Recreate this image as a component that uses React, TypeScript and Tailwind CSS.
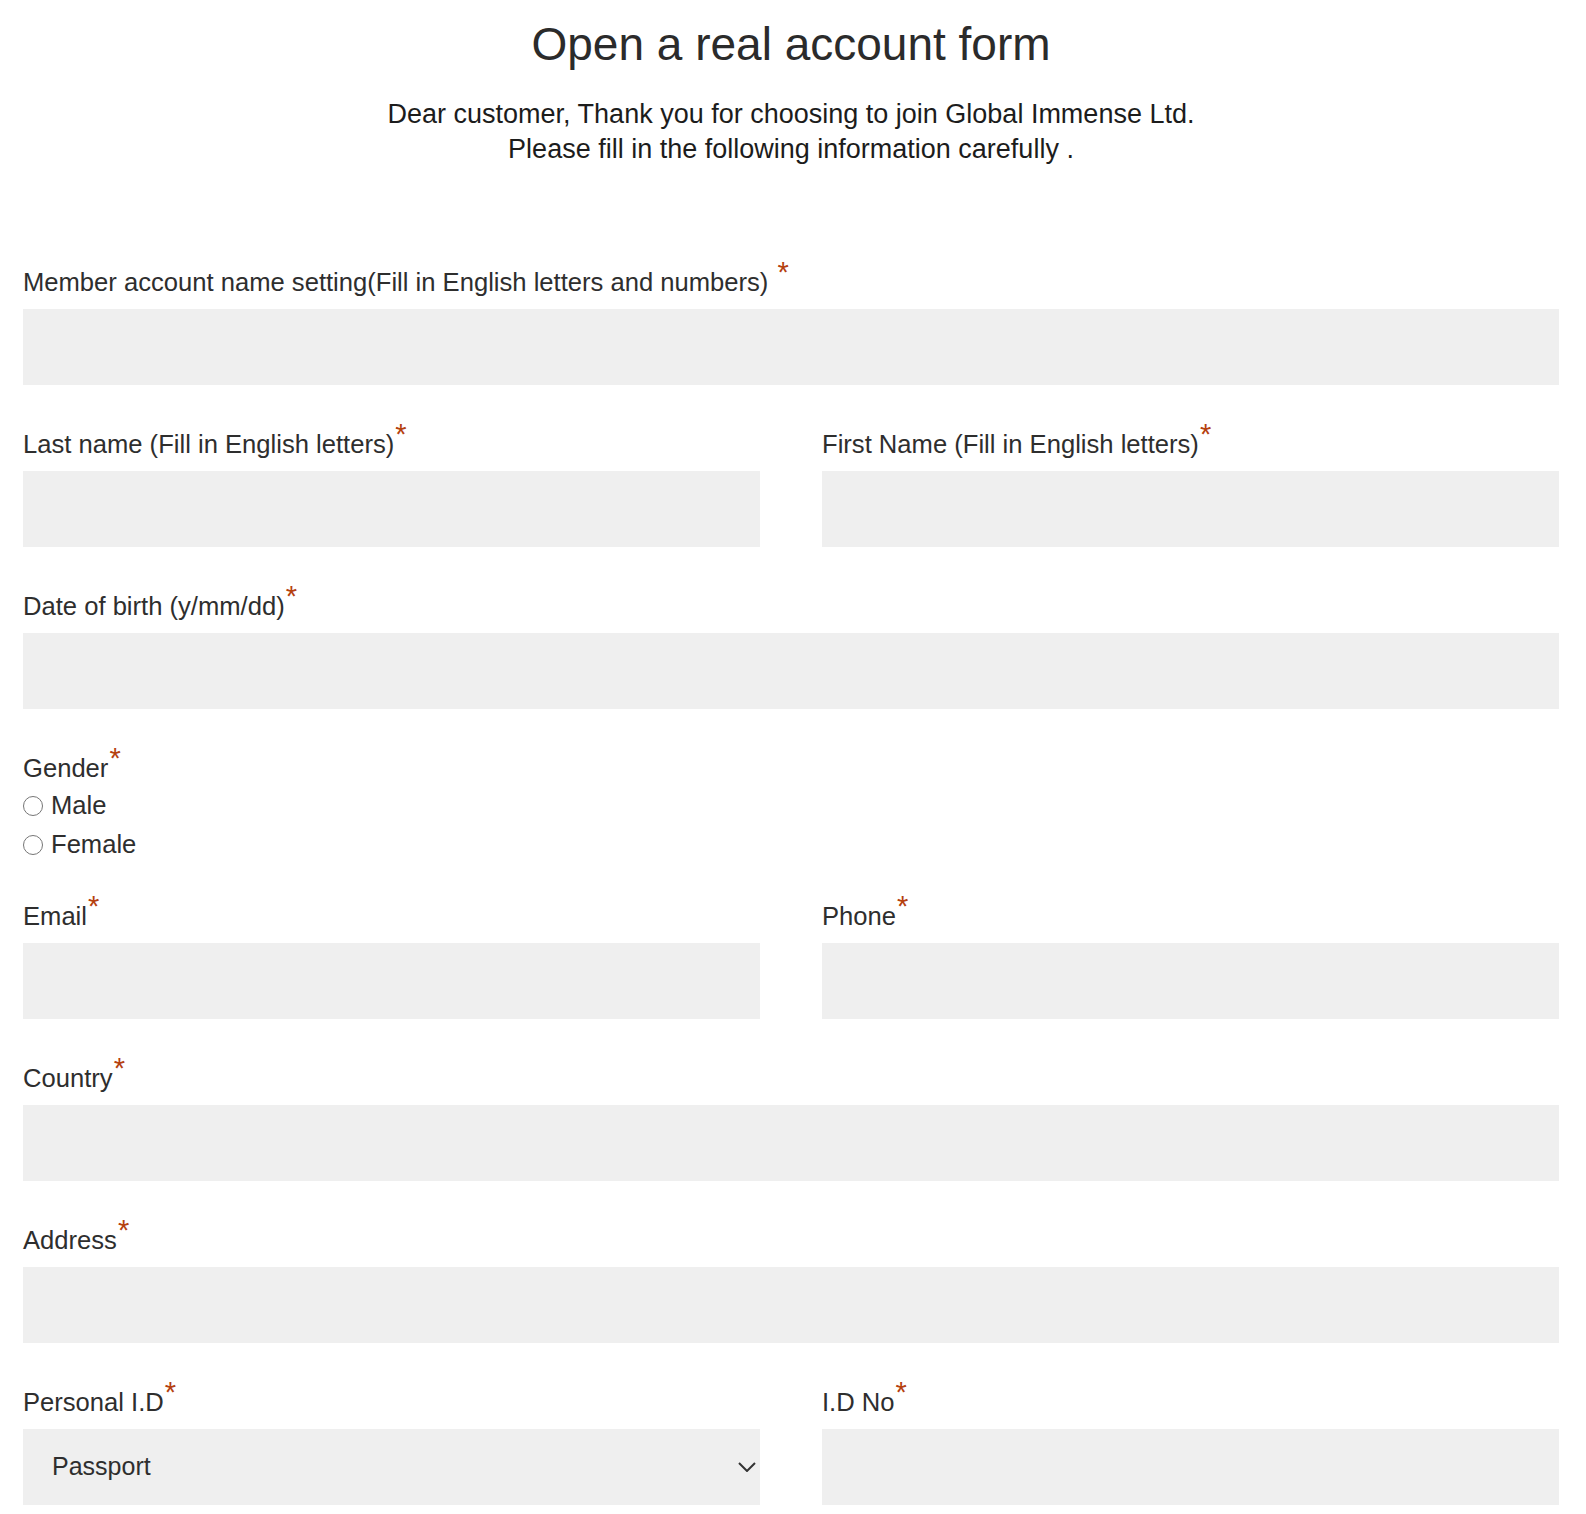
import { useState } from "react"

function Req({ spaced }: { spaced?: boolean }) {
  return (
    <span className={`text-[#b5410f] text-[29px] leading-none relative -top-[9px] ${spaced ? "ml-[9px]" : "ml-[1px]"}`}>*</span>
  )
}

function Field({ label, spaced, children }: { label: string; spaced?: boolean; children?: React.ReactNode }) {
  return (
    <div className="flex flex-col">
      <label className="h-[36px] leading-[36px] text-[25.6px] text-[#2e2e2e] whitespace-nowrap">
        {label}
        <Req spaced={spaced} />
      </label>
      <div className="mt-[9px]">
        {children ?? <input className="w-full h-[76px] bg-[#efefef] outline-none px-[29px] text-[24px]" />}
      </div>
    </div>
  )
}

function Radio({ label, checked, onChange }: { label: string; checked: boolean; onChange: () => void }) {
  return (
    <label className="flex items-center h-[39px] text-[25.6px] text-[#2e2e2e] cursor-pointer">
      <span className="w-[20px] h-[20px] rounded-full border border-[#767676] bg-white flex items-center justify-center mr-[8px]">
        {checked && <span className="w-[10px] h-[10px] rounded-full bg-[#333]" />}
      </span>
      <input type="radio" className="hidden" checked={checked} onChange={onChange} />
      {label}
    </label>
  )
}

export default function App() {
  const [gender, setGender] = useState("")

  return (
    <div className="min-h-screen bg-white pl-[23px] pr-[27px] pb-[24px]" style={{ fontFamily: '"Liberation Sans", Arial, sans-serif' }}>
      <header className="text-center text-[#2b2b2b]">
        <h1 className="text-[46px] leading-[52px] pt-[18px]">Open a real account form</h1>
        <p className="mt-[27px] text-[27px] leading-[35px] text-[#1c1c1c]">
          Dear customer, Thank you for choosing to join Global Immense Ltd.
          <br />
          Please fill in the following information carefully .
        </p>
      </header>

      <form className="mt-[97px] flex flex-col gap-[41px]">
        <Field label="Member account name setting(Fill in English letters and numbers)" spaced />

        <div className="grid grid-cols-2 gap-x-[62px]">
          <Field label="Last name (Fill in English letters)" />
          <Field label="First Name (Fill in English letters)" />
        </div>

        <Field label="Date of birth (y/mm/dd)" />

        <div className="flex flex-col -mb-[7px]">
          <label className="h-[36px] leading-[36px] text-[25.6px] text-[#2e2e2e]">
            Gender
            <Req />
          </label>
          <Radio label="Male" checked={gender === "male"} onChange={() => setGender("male")} />
          <Radio label="Female" checked={gender === "female"} onChange={() => setGender("female")} />
        </div>

        <div className="grid grid-cols-2 gap-x-[62px]">
          <Field label="Email" />
          <Field label="Phone" />
        </div>

        <Field label="Country" />

        <Field label="Address" />

        <div className="grid grid-cols-2 gap-x-[62px]">
          <Field label="Personal I.D">
            <div className="relative">
              <select className="appearance-none w-full h-[76px] bg-[#efefef] outline-none pl-[29px] text-[25px] text-[#2e2e2e]">
                <option>Passport</option>
                <option>ID Card</option>
                <option>Driver License</option>
              </select>
              <svg className="absolute right-[4px] top-1/2 -translate-y-1/2 pointer-events-none" width="18" height="10" viewBox="0 0 18 10" fill="none" stroke="#333" strokeWidth="2">
                <path d="M1 1l8 8 8-8" />
              </svg>
            </div>
          </Field>
          <Field label="I.D No" />
        </div>
      </form>
    </div>
  )
}
